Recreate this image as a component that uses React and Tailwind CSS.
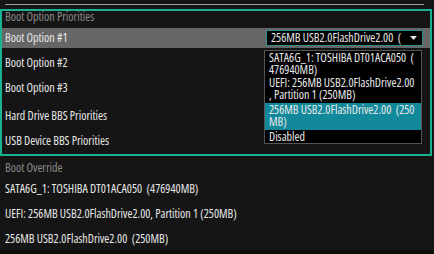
export default function App() {
  const font = { fontFamily: '"Open Sans", "Noto Sans", sans-serif' };
  return (
    <div className="w-[434px] h-[254px] bg-[#151515] text-[12px] [font-stretch:75%] text-[#e8e8e8] overflow-hidden relative" style={font}>
      <div className="h-[9px] pt-[4px] pl-[5px]">
        <div className="h-[1px] w-[419px] bg-[#a0a0a0]" />
      </div>
      <div className="w-[432px] h-[147px] border-2 border-[#19b394] flex flex-col">
        <div className="h-[17px] pl-[3px] leading-[12px] text-[#8a8a8a]">Boot Option Priorities</div>
        <div className="h-[20px] bg-[#666666] flex items-center justify-between pl-[3px] pr-[7px]">
          <span className="leading-[12px]">Boot Option #1</span>
          <div className="w-[157px] h-[16px] bg-[#000] border border-[#2b8f8c] flex items-center justify-between pl-[4px] pr-[5px] leading-[12px]">
            <span className="whitespace-pre">256MB USB2.0FlashDrive2.00  (</span>
            <svg width="7" height="4" viewBox="0 0 7 4"><path d="M0 0H7L3.5 4Z" fill="#e8e8e8" /></svg>
          </div>
        </div>
        <div className="mt-[5px] h-[20px] flex items-center pl-[3px]">Boot Option #2</div>
        <div className="mt-[5px] h-[20px] flex items-center pl-[3px]">Boot Option #3</div>
        <div className="mt-[8px] h-[20px] flex items-center pl-[3px]">Hard Drive BBS Priorities</div>
        <div className="mt-[5px] h-[20px] flex items-center pl-[3px]">USB Device BBS Priorities</div>
      </div>
      <div className="flex flex-col">
        <div className="mt-[2px] h-[20px] flex items-center pl-[5px] text-[#8a8a8a]">Boot Override</div>
        <div className="mt-[1px] h-[20px] flex items-center pl-[5px] whitespace-pre">SATA6G_1: TOSHIBA DT01ACA050  (476940MB)</div>
        <div className="mt-[5px] h-[20px] flex items-center pl-[5px]">UEFI: 256MB USB2.0FlashDrive2.00, Partition 1 (250MB)</div>
        <div className="mt-[5px] h-[20px] flex items-center pl-[5px] whitespace-pre">256MB USB2.0FlashDrive2.00  (250MB)</div>
      </div>
      <div className="absolute left-0 right-0 bottom-0 h-[4px] bg-[#0c0c0c]" />
      <div className="absolute left-[264px] top-[50px] w-[158px] h-[94px] bg-[#000] border border-[#555] leading-[12px] flex flex-col pt-[1px]">
        <div className="px-[4px] whitespace-pre">SATA6G_1: TOSHIBA DT01ACA050  (<br />476940MB)</div>
        <div className="px-[4px] mt-[1px] whitespace-pre">UEFI: 256MB USB2.0FlashDrive2.00<br />, Partition 1 (250MB)</div>
        <div className="px-[4px] mt-[2px] bg-[#12899a] h-[27px] pt-[1px] whitespace-pre">256MB USB2.0FlashDrive2.00  (250<br />MB)</div>
        <div className="px-[4px] pt-[1px]">Disabled</div>
      </div>
    </div>
  );
}
